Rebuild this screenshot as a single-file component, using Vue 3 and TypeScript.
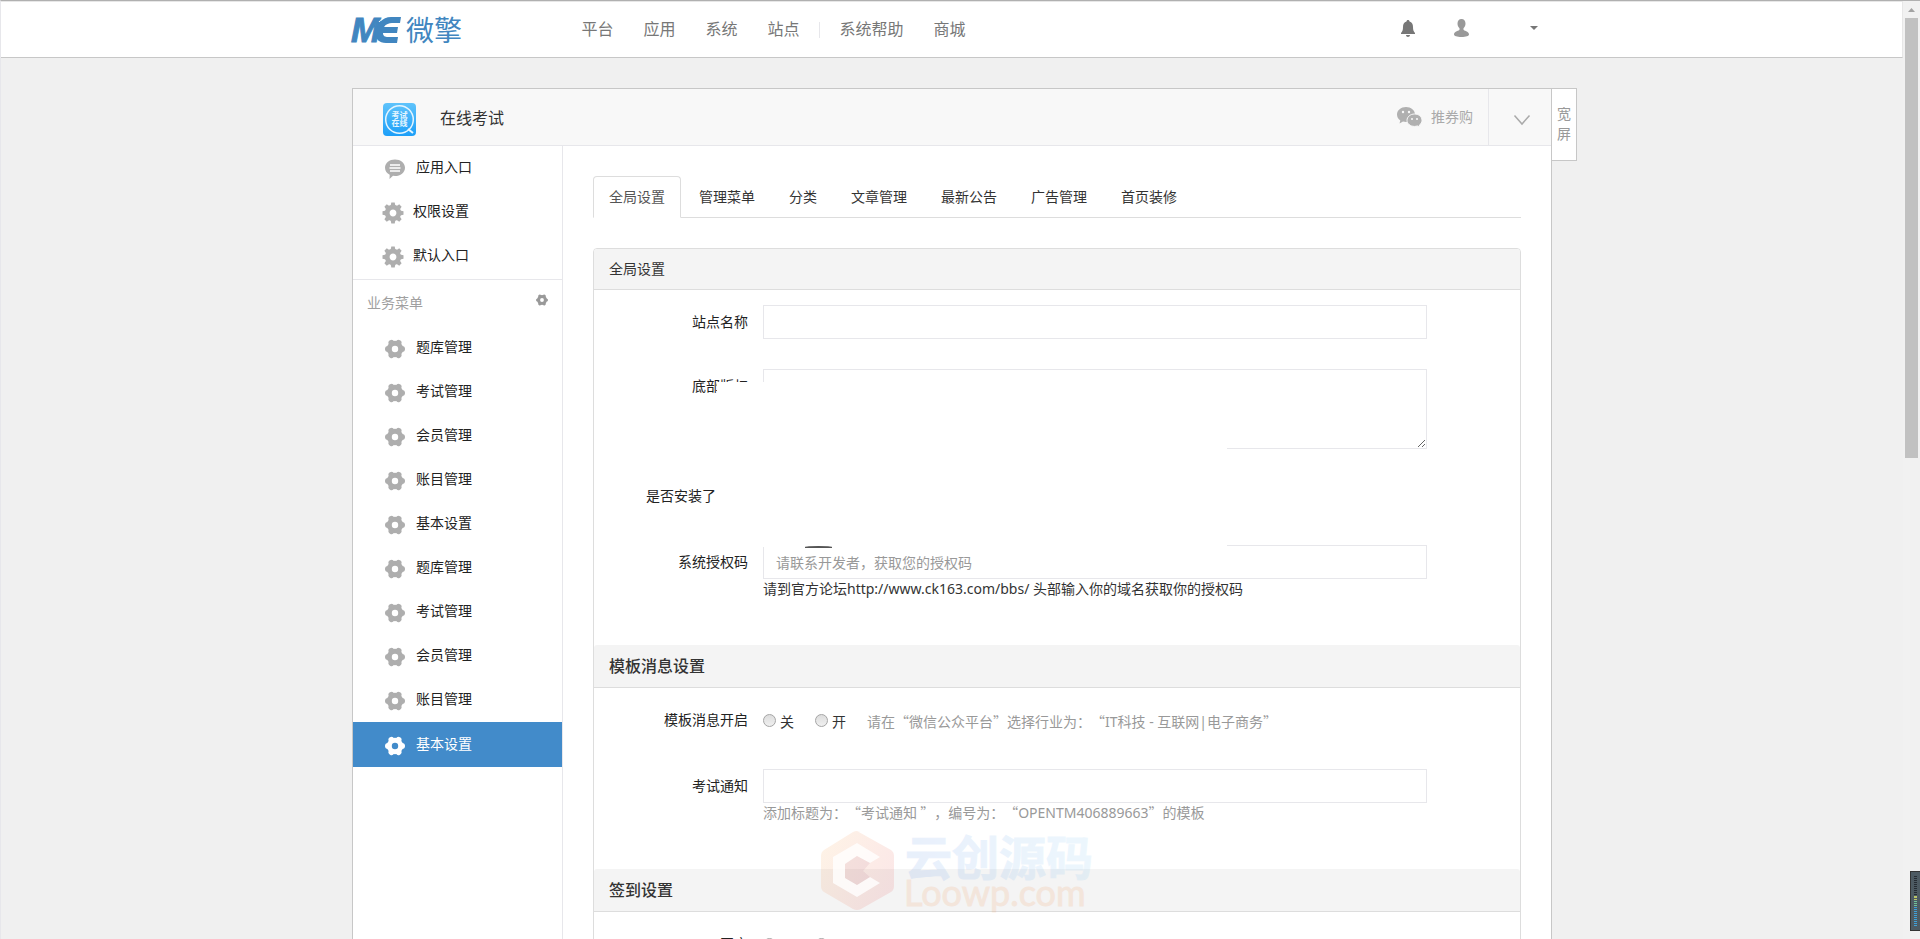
<script setup lang="ts">
import { ref } from 'vue'

interface MenuEntry { label: string; icon: 'bubble' | 'gear' }

const navMain: string[] = ['平台', '应用', '系统', '站点']
const navExtra: string[] = ['系统帮助', '商城']
const entries: MenuEntry[] = [
  { label: '应用入口', icon: 'bubble' },
  { label: '权限设置', icon: 'gear' },
  { label: '默认入口', icon: 'gear' },
]
const business: string[] = [
  '题库管理', '考试管理', '会员管理', '账目管理', '基本设置',
  '题库管理', '考试管理', '会员管理', '账目管理', '基本设置',
]
const activeBusiness = ref(9)
const tabs: string[] = ['全局设置', '管理菜单', '分类', '文章管理', '最新公告', '广告管理', '首页装修']
const activeTab = ref(0)
const siteName = ref('')
const footer = ref('')
const authCode = ref('')
const examNotice = ref('')
const eight: number[] = [0, 45, 90, 135, 180, 225, 270, 315]
const six: number[] = [0, 60, 120, 180, 240, 300]
const meter: string[] = Array.from({ length: 25 }, (_, i) =>
  i < 10 ? '#262c33' : i < 12 ? '#b9c46a' : i < 15 ? '#6fc39a' : '#3fa0d8')
</script>

<template>
  <div class="shell">
    <div class="view">
      <header class="topbar">
        <div class="wrap topbar-in">
          <a class="logo" href="#" aria-label="ME微擎">
            <svg width="112" height="30" viewBox="0 0 112 30">
              <text x="-1" y="27" class="logo-m">M</text>
              <path d="M49 2H39C30 2 25 9 24 17c-1 7 3 11 10 11h11l1-6H36c-3 0-5-1-5-4h14l1-6H32c2-3 5-4 8-4h8z" fill="#4186c0" />
              <path d="M27 7C30 3 34 1 39 1" stroke="#fff" stroke-width="1" fill="none" />
              <text x="54" y="26" class="logo-cn">微擎</text>
            </svg>
          </a>
          <nav class="nav">
            <a v-for="n in navMain" :key="n" href="#">{{ n }}</a>
            <span class="nav-sep"></span>
            <a v-for="n in navExtra" :key="n" href="#">{{ n }}</a>
          </nav>
          <div class="tools">
            <button type="button" aria-label="通知">
              <svg width="14" height="17" viewBox="0 0 14 17" fill="#777"><path d="M7 0c1 0 1.500.6 1.500 1.500C11 2.200 12 4.300 12 7c0 3 .5 4.500 2 6v1H0v-1c1.500-1.500 2-3 2-6 0-2.700 1-4.800 3.500-5.500C5.500.6 6 0 7 0zM5 15h4c0 1.200-.9 2-2 2s-2-.8-2-2z" /></svg>
            </button>
            <button type="button" aria-label="用户">
              <svg width="15" height="18" viewBox="0 0 15 18" fill="#999"><path d="M7.500 0c2.500 0 4 1.800 4 4.500 0 2-.8 3.700-2 4.800v1.500c0 1 5.500 1.500 5.500 4.700 0 1.500-3 2.500-7.500 2.500S0 17 0 15.500c0-3.200 5.500-3.700 5.500-4.700V9.300c-1.200-1.100-2-2.800-2-4.800C3.500 1.800 5 0 7.500 0z" /></svg>
            </button>
            <button type="button" class="caret-btn" aria-label="展开">
              <svg width="8" height="4" viewBox="0 0 8 4" fill="#777"><path d="M0 0h8L4 4z" /></svg>
            </button>
          </div>
        </div>
      </header>

      <div class="wrap app">
        <button type="button" class="wide">宽屏</button>
        <div class="app-head">
          <svg class="app-icon" width="33" height="33" viewBox="0 0 33 33">
            <defs><linearGradient id="ico" x1="0" y1="0" x2="0" y2="1"><stop offset="0" stop-color="#5fc3fb" /><stop offset="1" stop-color="#1d9ff8" /></linearGradient></defs>
            <rect width="33" height="33" rx="4" fill="url(#ico)" />
            <circle cx="16.500" cy="16.500" r="13.800" fill="none" stroke="#e4f5ff" stroke-width="1.500" />
            <path d="M25 26l5 4" stroke="#e4f5ff" stroke-width="2" />
            <text x="16.500" y="15" class="ico-t">考试</text>
            <text x="16.500" y="23" class="ico-t">在线</text>
          </svg>
          <h1>在线考试</h1>
          <div class="account">
            <svg width="25" height="20" viewBox="0 0 25 20">
              <path d="M9 0c5 0 9 3.300 9 7.500S14 15 9 15c-1 0-2-.2-3-.5L2.500 16.500l.8-3C1.300 12 0 10 0 7.500 0 3.300 4 0 9 0z" fill="#b0b0b0" />
              <circle cx="6" cy="5" r="1.200" fill="#f8f8f8" /><circle cx="12" cy="5" r="1.200" fill="#f8f8f8" />
              <path d="M17.500 7c4.200 0 7.500 2.700 7.500 6.300 0 2-1 3.700-2.600 4.800l.6 1.900-2.500-1.100c-1 .3-2 .5-3 .5-4.200 0-7.500-2.700-7.500-6.100S13.300 7 17.500 7z" fill="#b0b0b0" stroke="#f8f8f8" />
              <circle cx="15" cy="12" r="1" fill="#f8f8f8" /><circle cx="20" cy="12" r="1" fill="#f8f8f8" />
            </svg>
            <span>推券购</span>
          </div>
          <button type="button" class="fold" aria-label="切换">
            <svg width="16" height="10" viewBox="0 0 16 10" fill="none" stroke="#aaa" stroke-width="1.500"><path d="M.5.500L8 9 15.500.500" /></svg>
          </button>
        </div>

        <div class="app-body">
          <aside class="side">
            <ul class="group">
              <li v-for="e in entries" :key="e.label">
                <a href="#" :class="e.icon">
                  <svg v-if="e.icon === 'bubble'" width="20" height="20" viewBox="0 0 20 20">
                    <path d="M10 .5c5.500 0 10 3.400 10 8.200S15.500 17 10 17l-2-.2L4.500 20l.2-4.300C2 14.300 0 11.800 0 8.700 0 3.900 4.500.5 10 .5z" fill="#aeaeae" />
                    <path d="M5 6h10M4.500 9h11M5 12h10" stroke="#fff" stroke-width="1.300" />
                  </svg>
                  <svg v-else width="22" height="22" viewBox="-11 -11 22 22">
                    <circle r="5.800" fill="none" stroke="#aeaeae" stroke-width="4.800" />
                    <path v-for="a in eight" :key="a" d="M-2.400-7L-1.700-10.500H1.700L2.400-7z" fill="#aeaeae" :transform="`rotate(${a})`" />
                  </svg>
                  <span>{{ e.label }}</span>
                </a>
              </li>
            </ul>
            <div class="side-title">
              <span>业务菜单</span>
              <button type="button" aria-label="菜单设置">
                <svg width="12" height="12" viewBox="-10 -10 20 20"><circle r="5.700" fill="none" stroke="#999" stroke-width="5" /><circle v-for="a in six" :key="a" cx="7.300" cy="0" r="2.700" fill="#999" :transform="`rotate(${a})`" /></svg>
              </button>
            </div>
            <ul class="biz">
              <li v-for="(b, i) in business" :key="i">
                <a href="#" :class="{ on: i === activeBusiness }" @click.prevent="activeBusiness = i">
                  <svg width="20" height="20" viewBox="-10 -10 20 20">
                    <circle r="5.700" fill="none" stroke="currentColor" stroke-width="5" />
                    <circle v-for="a in six" :key="a" cx="7" cy="0" r="3" fill="currentColor" :transform="`rotate(${a})`" />
                  </svg>
                  <span>{{ b }}</span>
                </a>
              </li>
            </ul>
          </aside>

          <main class="main">
            <nav class="tabs">
              <a v-for="(t, i) in tabs" :key="t" href="#" :class="{ on: i === activeTab }" @click.prevent="activeTab = i">{{ t }}</a>
            </nav>

            <form class="panel" @submit.prevent>
              <h2 class="bar">全局设置</h2>
              <div class="body">
                <div class="row">
                  <label class="label" for="site">站点名称</label>
                  <div class="field"><input id="site" v-model="siteName" type="text" /></div>
                </div>
                <div class="row">
                  <label class="label" for="foot">底部版权</label>
                  <div class="field"><textarea id="foot" v-model="footer"></textarea></div>
                </div>
                <div class="row option"><span class="label cut">是否安装了</span></div>
                <div class="row">
                  <label class="label" for="auth">系统授权码</label>
                  <div class="field">
                    <input id="auth" v-model="authCode" type="text" placeholder="请联系开发者，获取您的授权码" />
                    <p class="help dark">请到官方论坛<span class="latin">http://www.ck163.com/bbs/ </span>头部输入你的域名获取你的授权码</p>
                  </div>
                </div>
                <div class="cover"><span class="edge"></span></div>
              </div>

              <h3 class="bar big">模板消息设置</h3>
              <div class="body">
                <div class="row option">
                  <span class="label">模板消息开启</span>
                  <div class="field radios">
                    <label><input type="radio" name="tpl" value="0" /><span>关</span></label>
                    <label><input type="radio" name="tpl" value="1" /><span>开</span></label>
                    <span class="hint">请在“微信公众平台”选择行业为：“<span class="latin">IT</span>科技<span class="latin"> - </span>互联网<span class="latin">|</span>电子商务”</span>
                  </div>
                </div>
                <div class="row">
                  <label class="label" for="exam">考试通知</label>
                  <div class="field">
                    <input id="exam" v-model="examNotice" type="text" />
                    <p class="help">添加标题为：“考试通知 ”，编号为：“<span class="latin">OPENTM406889663</span>”的模板</p>
                  </div>
                </div>
              </div>

              <div class="stamped">
                <h3 class="bar big">签到设置</h3>
                <svg class="stamp" width="280" height="84" viewBox="0 0 280 84" aria-hidden="true">
                  <defs>
                    <linearGradient id="hex" x1="0" y1="0" x2="1" y2=".6"><stop offset="0" stop-color="#f9a030" /><stop offset="1" stop-color="#e03a3a" /></linearGradient>
                    <linearGradient id="cn" x1="0" y1="0" x2="1" y2="0"><stop offset="0" stop-color="#2b6fe0" /><stop offset="1" stop-color="#53b4f2" /></linearGradient>
                  </defs>
                  <path d="M37 2L71 21Q74 23 74 27V57Q74 61 71 63L41 80Q37 82 33 80L4 63Q1 61 1 57V27Q1 23 4 21L33 3Q37 1 41 3z" fill="url(#hex)" opacity=".12" />
                  <path d="M37 14L60 28 50 34 37 27 25 35V49L37 56 50 48 60 54 37 68 13 54V28z" fill="#fff" opacity=".8" />
                  <path d="M37 27L50 34 43 42 50 48 37 56 25 49V35z" fill="#8d2f6c" opacity=".08" />
                  <text x="85" y="46" class="stamp-cn" fill="url(#cn)" stroke="url(#cn)">云创源码</text>
                  <text x="84" y="77" class="stamp-en">Loowp.com</text>
                </svg>
              </div>
              <div class="body">
                <div class="row option">
                  <span class="label">开启</span>
                  <div class="field radios">
                    <label><input type="radio" name="sign" value="0" /><span>关</span></label>
                    <label><input type="radio" name="sign" value="1" /><span>开</span></label>
                  </div>
                </div>
              </div>
            </form>
          </main>
        </div>
      </div>
    </div>

    <div class="scroll">
      <svg width="17" height="17" viewBox="0 0 17 17" fill="#a3a3a3"><path d="M5 11h7L8.500 7z" /></svg>
      <div class="thumb"></div>
      <div class="widget"><i v-for="(c, i) in meter" :key="i" :style="{ background: c }"></i></div>
    </div>
  </div>
</template>

<style>
body { margin: 0; background: #f0f0f0; }
</style>

<style scoped>
* { box-sizing: border-box; }
.shell {
  display: grid; grid-template-columns: minmax(0, 1fr) 17px; height: 100vh; overflow: hidden;
  border-top: 1px solid #b0b0b0; border-left: 1px solid #e7e7eb; background: #f0f0f0;
  font: 14px/20px "Noto Sans CJK SC", sans-serif; color: #333; text-spacing-trim: space-all;
}
a { color: inherit; text-decoration: none; }
ul { list-style: none; margin: 0; padding: 0; }
button { background: none; border: 0; padding: 0; font: inherit; color: inherit; display: flex; }
svg { display: block; flex: none; overflow: visible; }
h1, h2, h3, p { margin: 0; font-size: 14px; font-weight: 400; }
.view { height: 100%; overflow: hidden; }
.wrap { max-width: 1200px; margin: 0 auto; }
.topbar { background: #fff; border: 1px solid #e7e7e7; border-left: 0; border-bottom-color: #c7c7c7; }
.topbar-in { display: flex; height: 55px; align-items: center; }
.logo-m { font: italic 900 35px "Liberation Sans", sans-serif; fill: #4186c0; stroke: #4186c0; stroke-width: 1px; }
.logo-cn { font: 28px "Noto Sans CJK SC", sans-serif; fill: #4186c0; }
.nav { display: flex; align-items: center; margin: 0 0 3px 103px; font-size: 16px; color: #777; }
.nav a { padding: 0 15px; }
.nav-sep { width: 1px; height: 16px; margin: 3px 5px 0 4px; background: #e7e7eb; }
.tools { display: flex; align-items: center; margin: 0 14px 3px auto; gap: 39px; }
.caret-btn { margin-left: 22px; }
.app { position: relative; margin-top: 30px; border: 1px solid #c7c7c7; background: #fff; }
.wide {
  position: absolute; left: 100%; top: -1px; width: 26px; height: 73px; padding: 14px 5px 0;
  border: 1px solid #c7c7c7; background: #fff; color: #999; line-height: 20px;
}
.app-head { display: flex; align-items: center; height: 57px; padding-left: 30px; background: #f8f8f8; border-bottom: 1px solid #e7e7eb; }
.app-icon { margin-top: 4px; }
.ico-t { font: 700 8px "Noto Sans CJK SC", sans-serif; fill: #e4f5ff; text-anchor: middle; }
h1 { margin: 0 0 1px 24px; font-size: 16px; }
.account { display: flex; align-items: center; gap: 9px; margin-left: auto; padding-right: 15px; color: #aaa; }
.account span { margin-bottom: 2px; }
.fold { width: 63px; height: 100%; align-items: center; justify-content: center; padding: 6px 0 0 4px; border-left: 1px solid #e7e7eb; }
.app-body { display: flex; min-height: 900px; }
.side { flex: none; width: 210px; border-right: 1px solid #e7e7eb; }
.side a { display: flex; align-items: center; height: 44px; padding-left: 32px; color: #222; }
.side a svg { margin-top: 2px; }
.side a span { margin: 0 0 4px 11px; }
.group { padding-bottom: 1px; border-bottom: 1px solid #e7e7eb; }
.group .gear { padding-left: 29px; }
.group .gear span { margin-left: 9px; }
.side-title { display: flex; align-items: center; justify-content: space-between; height: 46px; padding: 0 14px; color: #a0a0a0; }
.side-title span { margin-bottom: 2px; }
.side-title button { margin-bottom: 7px; }
.biz svg { color: #aeaeae; }
.biz a.on { height: 45px; background: #428bca; color: #fff; }
.biz a.on svg { color: #fff; }
.main { flex: 1; min-width: 0; padding: 30px; }
.tabs { display: flex; gap: 2px; border-bottom: 1px solid #ddd; margin-bottom: 30px; }
.tabs a { height: 42px; padding: 9px 15px; margin-bottom: -1px; border: 1px solid transparent; border-radius: 4px 4px 0 0; }
.tabs a.on { color: #555; background: #fff; border-color: #ddd #ddd #fff; }
.panel { border: 1px solid #ddd; border-radius: 4px; }
.bar { padding: 9px 15px 11px; background: #f4f4f4; border-bottom: 1px solid #ddd; border-radius: 3px 3px 0 0; }
.big { font-size: 16px; line-height: 22px; font-weight: 500; }
.body { position: relative; padding: 15px; }
.row { display: flex; margin-bottom: 30px; }
.option { min-height: 36px; }
.label { flex: none; width: 154px; padding: 6px 15px 0 0; text-align: right; color: #222; }
.cut { padding-right: 47px; }
.field { flex: 0 1 664px; min-width: 0; }
input[type="text"], textarea {
  display: block; width: 100%; height: 34px; padding: 6px 12px; border: 1px solid #e7e7eb; border-radius: 0;
  background: #fff; font: inherit; color: #555; outline: 0;
}
textarea { height: 80px; resize: vertical; }
input::placeholder { color: #999; opacity: 1; }
.help { color: #999; white-space: nowrap; margin-top: -1px; padding-bottom: 1px; }
.dark { color: #333; }
.latin { font-family: "Noto Sans", "Open Sans", sans-serif; white-space: pre; }
.radios { display: flex; align-items: center; height: 36px; white-space: nowrap; }
.radios label { display: flex; align-items: center; gap: 4px; margin-right: 21px; }
.radios input {
  appearance: none; width: 13px; height: 13px; margin: 0 0 2px; border: 1px solid #a5a5a5; border-radius: 50%;
  background: linear-gradient(#ddd, #f0f0f0);
}
.hint { color: #999; }
.cover { position: absolute; left: 123px; top: 92px; width: 510px; height: 165px; background: #fff; }
.edge { position: absolute; left: 88px; bottom: -1px; width: 27px; height: 2px; border-radius: 50% 50% 0 0; background: #555; }
.stamped { position: relative; }
.stamp { position: absolute; left: 226px; top: -40px; pointer-events: none; }
.stamp-cn { font: 700 47px "Noto Sans CJK SC", sans-serif; opacity: .1; }
.stamp-en { font: 36px Lato, sans-serif; fill: #f08030; stroke: #f08030; opacity: .12; }
.scroll { position: relative; background: #f1f1f1; }
.thumb { width: 13px; height: 440px; margin-left: 2px; background: #c1c1c1; }
.widget {
  position: absolute; right: 0; bottom: 8px; width: 10px; height: 60px; padding: 4px 3px;
  display: flex; flex-direction: column; gap: 1px; background: #4d5a62; border: 1px solid #333; border-right: 0;
}
.widget i { flex: 1; min-height: 0; }
</style>
